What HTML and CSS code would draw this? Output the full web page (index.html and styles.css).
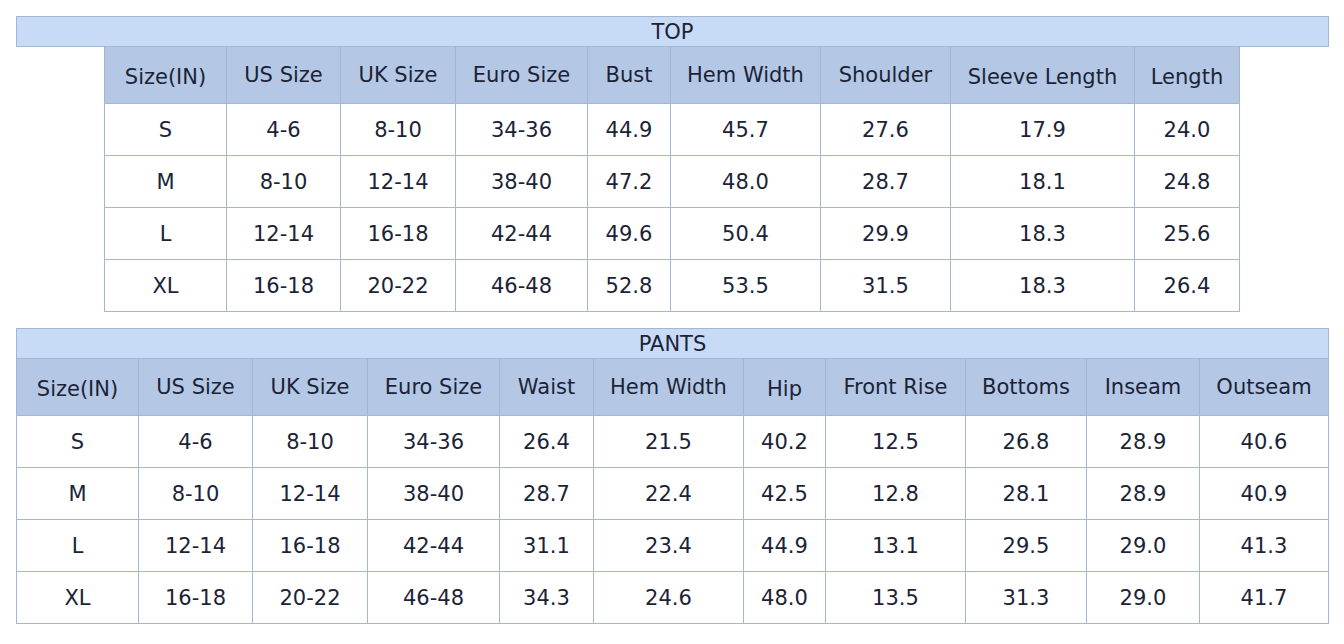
FILE: index.html
```html
<!DOCTYPE html>
<html>
<head>
<meta charset="utf-8">
<link rel="stylesheet" href="styles.css">
</head>
<body>
<section class="chart">
  <div class="title">TOP</div>
  <table class="grid top">
    <colgroup>
      <col style="width:122px"><col style="width:114px"><col style="width:115px"><col style="width:132px"><col style="width:83px"><col style="width:150px"><col style="width:130px"><col style="width:184px"><col style="width:105px">
    </colgroup>
    <tr class="head">
      <th class="d">Size(IN)</th><th>US Size</th><th>UK Size</th><th>Euro Size</th><th>Bust</th><th>Hem Width</th><th>Shoulder</th><th class="d">Sleeve Length</th><th class="d">Length</th>
    </tr>
    <tr><td>S</td><td>4-6</td><td>8-10</td><td>34-36</td><td>44.9</td><td>45.7</td><td>27.6</td><td>17.9</td><td>24.0</td></tr>
    <tr><td>M</td><td>8-10</td><td>12-14</td><td>38-40</td><td>47.2</td><td>48.0</td><td>28.7</td><td>18.1</td><td>24.8</td></tr>
    <tr><td>L</td><td>12-14</td><td>16-18</td><td>42-44</td><td>49.6</td><td>50.4</td><td>29.9</td><td>18.3</td><td>25.6</td></tr>
    <tr><td>XL</td><td>16-18</td><td>20-22</td><td>46-48</td><td>52.8</td><td>53.5</td><td>31.5</td><td>18.3</td><td>26.4</td></tr>
  </table>
</section>
<section class="chart">
  <div class="title">PANTS</div>
  <table class="grid pants">
    <colgroup>
      <col style="width:122px"><col style="width:114px"><col style="width:115px"><col style="width:132px"><col style="width:94px"><col style="width:150px"><col style="width:82px"><col style="width:140px"><col style="width:121px"><col style="width:113px"><col style="width:129px">
    </colgroup>
    <tr class="head">
      <th class="d">Size(IN)</th><th>US Size</th><th>UK Size</th><th>Euro Size</th><th>Waist</th><th>Hem Width</th><th class="d">Hip</th><th>Front Rise</th><th>Bottoms</th><th>Inseam</th><th>Outseam</th>
    </tr>
    <tr><td>S</td><td>4-6</td><td>8-10</td><td>34-36</td><td>26.4</td><td>21.5</td><td>40.2</td><td>12.5</td><td>26.8</td><td>28.9</td><td>40.6</td></tr>
    <tr><td>M</td><td>8-10</td><td>12-14</td><td>38-40</td><td>28.7</td><td>22.4</td><td>42.5</td><td>12.8</td><td>28.1</td><td>28.9</td><td>40.9</td></tr>
    <tr><td>L</td><td>12-14</td><td>16-18</td><td>42-44</td><td>31.1</td><td>23.4</td><td>44.9</td><td>13.1</td><td>29.5</td><td>29.0</td><td>41.3</td></tr>
    <tr><td>XL</td><td>16-18</td><td>20-22</td><td>46-48</td><td>34.3</td><td>24.6</td><td>48.0</td><td>13.5</td><td>31.3</td><td>29.0</td><td>41.7</td></tr>
  </table>
</section>
</body>
</html>
```
FILE: styles.css
```css
html, body {
  margin: 0;
  padding: 0;
  background: #ffffff;
}
body {
  padding: 16px 16px 0 16px;
  width: 1313px;
  font-family: "DejaVu Sans", Verdana, sans-serif;
  color: #1b2337;
  font-size: 21px;
}
.chart {
  display: flex;
  flex-direction: column;
  align-items: center;
  margin-bottom: 16px;
}
.title {
  box-sizing: border-box;
  width: 100%;
  height: 31px;
  padding-top: 1px;
  line-height: 28px;
  background: #c8dbf6;
  border: 1px solid #a3b6d4;
  text-align: center;
  font-size: 21px;
}
.grid {
  border-collapse: collapse;
  table-layout: fixed;
  margin-top: -1px;
}
.grid.top {
  margin-right: 1px;
}
.grid th, .grid td {
  border: 1px solid #a3b6d4;
  padding: 0;
  text-align: center;
  vertical-align: middle;
  font-weight: normal;
  white-space: nowrap;
}
.grid .head th {
  background: #b4c8e5;
  height: 53px;
  padding-top: 1px;
  padding-bottom: 2px;
}
.grid .head th.d {
  padding-top: 3px;
  padding-bottom: 0;
}
.grid td {
  height: 51px;
}
```
